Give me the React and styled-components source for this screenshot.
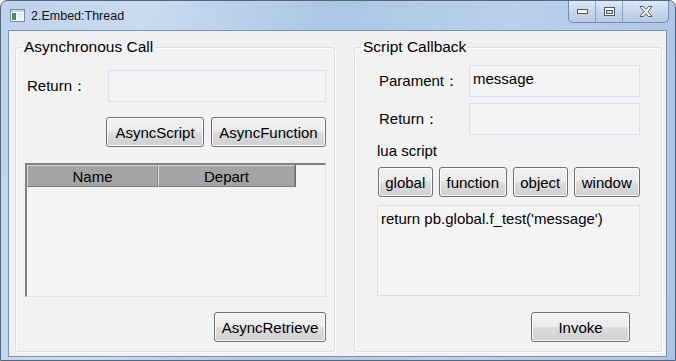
import React from "react";
import styled, { createGlobalStyle } from "styled-components";

const GlobalStyle = createGlobalStyle`
  html, body {
    margin: 0;
    padding: 0;
    overflow: hidden;
    background: #ffffff;
  }
  body {
    font-family: "Liberation Sans", Arial, sans-serif;
  }
`;

const Frame = styled.div`
  width: 676px;
  height: 361px;
  box-sizing: border-box;
  display: flex;
  flex-direction: column;
  padding: 0 8px 3px 7px;
  border: 1px solid #55677f;
  border-radius: 7px 7px 0 0;
  background: linear-gradient(
    100deg,
    #bdd3ec 0%,
    #c9dbef 20%,
    #abc6e6 45%,
    #b9d0ea 70%,
    #a9c4e5 100%
  );
`;

const TitleBar = styled.div`
  height: 29px;
  display: flex;
  align-items: center;
  gap: 6px;
  padding-left: 2px;
`;

const Caption = styled.span`
  font-family: "Liberation Sans", Arial, sans-serif;
  font-size: 12.5px;
  color: #111;
  margin-top: 1px;
`;

const Controls = styled.div`
  margin-left: auto;
  margin-right: -2px;
  align-self: flex-start;
  display: flex;
  height: 21px;
  border: 1px solid #7a8ba3;
  border-top: none;
  border-radius: 0 0 5px 5px;
  overflow: hidden;
  background: linear-gradient(180deg, #dfe9f5 0%, #c6d7ec 50%, #b4cae4 100%);
`;

const ControlBtn = styled.div`
  width: ${(p) => p.$w}px;
  display: flex;
  align-items: center;
  justify-content: center;
  border-left: ${(p) => (p.$first ? "none" : "1px solid #8fa0b8")};
`;

const Client = styled.div`
  flex: 1;
  display: flex;
  gap: 19px;
  padding: 7px 4px 0 6px;
  background: #f0f0f0;
  border: 1px solid #8193ab;
`;

const Group = styled.fieldset`
  box-sizing: border-box;
  width: ${(p) => p.$w}px;
  height: 314px;
  margin: 0;
  padding: 0;
  min-width: 0;
  border: 1px solid #d5dfe5;
  border-radius: 3px;
  box-shadow: inset 1px 1px 0 #ffffff, 1px 1px 0 #ffffff;
  background: #f2f2f2;
  display: flex;
  flex-direction: column;
`;

const Legend = styled.legend`
  margin-left: 6px;
  padding: 0 2px;
  font-size: 15.5px;
  line-height: 18px;
  color: #000;
`;

const Body = styled.div`
  display: flex;
  flex-direction: column;
  padding: ${(p) => p.$pad};
`;

const Row = styled.div`
  display: flex;
  align-items: center;
  margin-top: ${(p) => p.$mt || 0}px;
`;

const Label = styled.span`
  width: ${(p) => p.$w}px;
  padding-left: 2px;
  box-sizing: border-box;
  font-size: 15px;
  color: #000;
  flex-shrink: 0;
`;

const Field = styled.div`
  flex: 1;
  height: 32px;
  box-sizing: border-box;
  padding: 3px 3px;
  border: 1px solid #d6e0ea;
  background: #f4f4f4;
  font-size: 15px;
  line-height: 20px;
  color: #000;
`;

const Text = styled.div`
  font-size: 15px;
  line-height: 18px;
  margin-top: ${(p) => p.$mt || 0}px;
  color: #000;
`;

const ButtonRow = styled.div`
  display: flex;
  gap: ${(p) => p.$gap || 6}px;
  justify-content: ${(p) => (p.$start ? "flex-start" : "flex-end")};
  margin-top: ${(p) => p.$mt || 0}px;
  padding-left: ${(p) => p.$pl || 0}px;
  padding-right: ${(p) => p.$pr || 0}px;
`;

const Button = styled.button`
  width: ${(p) => p.$w}px;
  height: 30px;
  box-sizing: border-box;
  padding: 0;
  border: 1px solid #707070;
  border-radius: 3px;
  background: linear-gradient(180deg, #f2f2f2 0%, #ebebeb 48%, #dddddd 52%, #cfcfcf 100%);
  box-shadow: inset 0 0 0 1px #fcfcfc;
  font-family: "Liberation Sans", Arial, sans-serif;
  font-size: 15px;
  color: #000;
`;

const Table = styled.div`
  height: 134px;
  margin-top: 16px;
  box-sizing: border-box;
  border-top: 2px solid #808080;
  border-left: 2px solid #808080;
  border-right: 1px solid #e3e3e3;
  border-bottom: 1px solid #e3e3e3;
  background: #f4f4f4;
`;

const HeadRow = styled.div`
  display: flex;
  width: 268px;
  height: 22px;
  border-right: 1px solid #6b6b6b;
`;

const HeadCell = styled.div`
  width: ${(p) => p.$w}px;
  box-sizing: border-box;
  display: flex;
  align-items: center;
  justify-content: center;
  background: #a4a4a4;
  border-left: 1px solid #d8d8d8;
  border-top: 1px solid #d8d8d8;
  border-right: 1px solid #8a8a8a;
  border-bottom: 1px solid #7c7c7c;
  font-size: 15px;
  color: #000;
`;

const Script = styled.div`
  height: 91px;
  margin-top: 8px;
  box-sizing: border-box;
  padding: 3px 3px;
  border: 1px solid #d6e0ea;
  background: #f4f4f4;
  font-size: 15px;
  line-height: 20px;
  color: #000;
`;

const AppIcon = () => (
  <svg width="15" height="13" viewBox="0 0 15 13">
    <rect x="0.5" y="0.5" width="14" height="12" fill="#f6f6f6" stroke="#7d8a99" />
    <rect x="1" y="1" width="13" height="2" fill="#c9d6e4" />
    <rect x="2" y="4" width="4" height="7" fill="#3f8f6f" />
    <rect x="7" y="4" width="6" height="7" fill="#e8eef4" />
  </svg>
);

export default function App() {
  return (
    <>
      <GlobalStyle />
      <Frame>
        <TitleBar>
          <AppIcon />
          <Caption>2.Embed:Thread</Caption>
          <Controls>
            <ControlBtn $w={26} $first>
              <svg width="11" height="5" viewBox="0 0 11 5">
                <rect x="0.5" y="0.5" width="10" height="4" fill="#fff" stroke="#4c5a6e" />
              </svg>
            </ControlBtn>
            <ControlBtn $w={26}>
              <svg width="11" height="9" viewBox="0 0 11 9">
                <rect x="0.5" y="0.5" width="10" height="8" fill="#fff" stroke="#4c5a6e" />
                <rect x="2.5" y="3.5" width="6" height="3" fill="#c9d7e8" stroke="#4c5a6e" />
              </svg>
            </ControlBtn>
            <ControlBtn $w={45}>
              <svg width="14" height="11" viewBox="0 0 14 11">
                <path
                  d="M1 0.5 L4.5 0.5 L7 3.5 L9.5 0.5 L13 0.5 L9 5.5 L13 10.5 L9.5 10.5 L7 7.5 L4.5 10.5 L1 10.5 L5 5.5 Z"
                  fill="#ffffff"
                  stroke="#4c5a6e"
                  strokeLinejoin="round"
                />
              </svg>
            </ControlBtn>
          </Controls>
        </TitleBar>
        <Client>
          <Group $w={320}>
            <Legend>Asynchronous Call</Legend>
            <Body $pad="0 8px 0 9px">
              <Row $mt={14}>
                <Label $w={83}>Return：</Label>
                <Field />
              </Row>
              <ButtonRow $mt={15} $gap={7}>
                <Button $w={98}>AsyncScript</Button>
                <Button $w={115}>AsyncFunction</Button>
              </ButtonRow>
              <Table>
                <HeadRow>
                  <HeadCell $w={131}>Name</HeadCell>
                  <HeadCell $w={137}>Depart</HeadCell>
                </HeadRow>
              </Table>
              <ButtonRow $mt={15}>
                <Button $w={112}>AsyncRetrieve</Button>
              </ButtonRow>
            </Body>
          </Group>
          <Group $w={308}>
            <Legend>Script Callback</Legend>
            <Body $pad="0 21px 0 22px">
              <Row $mt={9}>
                <Label $w={92}>Parament：</Label>
                <Field>message</Field>
              </Row>
              <Row $mt={6}>
                <Label $w={92}>Return：</Label>
                <Field />
              </Row>
              <Text $mt={7}>lua script</Text>
              <ButtonRow $start $mt={7} $pl={1}>
                <Button $w={55}>global</Button>
                <Button $w={69}>function</Button>
                <Button $w={55}>object</Button>
                <Button $w={67}>window</Button>
              </ButtonRow>
              <Script>return pb.global.f_test('message')</Script>
              <ButtonRow $mt={16} $pr={10}>
                <Button $w={99}>Invoke</Button>
              </ButtonRow>
            </Body>
          </Group>
        </Client>
      </Frame>
    </>
  );
}
